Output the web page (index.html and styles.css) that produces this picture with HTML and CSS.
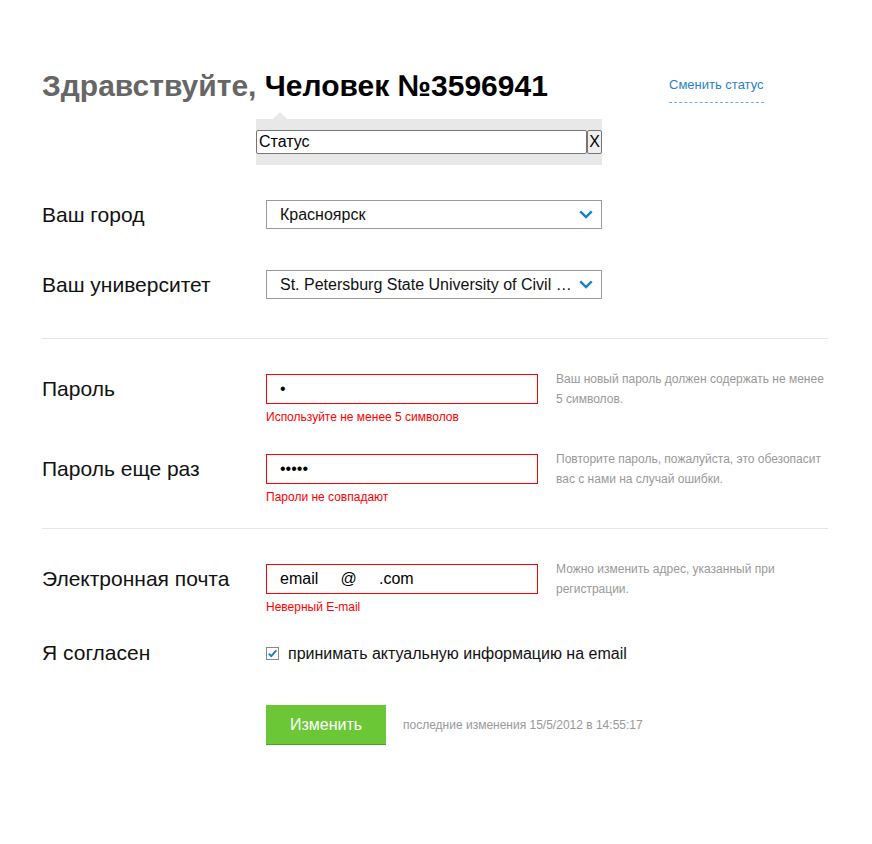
FILE: index.html
```html
<!DOCTYPE html>
<html lang="ru">
<head>
<meta charset="utf-8">
<title>Профиль</title>
<link rel="stylesheet" href="styles.css">
</head>
<body>
<div class="page">
  <div class="header">
    <h1 class="greeting"><span class="hello">Здравствуйте,</span> Человек №3596941</h1>
    <a class="status-link" href="#">Сменить статус</a>
  </div>
  <div class="status-pop">
    <input class="status-input" type="text" value="Статус"><button class="status-close" type="button">X</button>
  </div>

  <div class="row row-city">
    <div class="label label-sel">Ваш город</div>
    <div class="select">
      <span class="select-text">Красноярск</span>
      <svg class="chev" width="14" height="9" viewBox="0 0 14 9"><path d="M1.3 1.3 L7 7 L12.7 1.3" fill="none" stroke="#1a80c4" stroke-width="2.4"/></svg>
    </div>
  </div>

  <div class="row row-uni">
    <div class="label label-sel">Ваш университет</div>
    <div class="select">
      <span class="select-text">St. Petersburg State University of Civil …</span>
      <svg class="chev" width="14" height="9" viewBox="0 0 14 9"><path d="M1.3 1.3 L7 7 L12.7 1.3" fill="none" stroke="#1a80c4" stroke-width="2.4"/></svg>
    </div>
  </div>

  <hr class="sep sep-1">

  <div class="row row-pass">
    <div class="label">Пароль</div>
    <div class="field">
      <input class="text-input error" type="password" value="a">
      <div class="err">Используйте не менее 5 символов</div>
    </div>
    <div class="hint">Ваш новый пароль должен содержать не менее 5 символов.</div>
  </div>

  <div class="row row-pass2">
    <div class="label">Пароль еще раз</div>
    <div class="field">
      <input class="text-input error" type="password" value="abcde">
      <div class="err">Пароли не совпадают</div>
    </div>
    <div class="hint">Повторите пароль, пожалуйста, это обезопасит вас с нами на случай ошибки.</div>
  </div>

  <hr class="sep sep-2">

  <div class="row row-email">
    <div class="label">Электронная почта</div>
    <div class="field">
      <input class="text-input error" type="text" value="email     @     .com">
      <div class="err">Неверный E-mail</div>
    </div>
    <div class="hint">Можно изменить адрес, указанный при регистрации.</div>
  </div>

  <div class="row row-agree">
    <div class="label">Я согласен</div>
    <label class="check">
      <span class="box"><svg width="11" height="11" viewBox="0 0 11 11"><path d="M1.8 5.6 L4.3 8.1 L9.3 2.4" fill="none" stroke="#1a80c4" stroke-width="2"/></svg></span>
      <span class="check-text">принимать актуальную информацию на email</span>
    </label>
  </div>

  <div class="row row-submit">
    <div class="label"></div>
    <button class="submit" type="button">Изменить</button>
    <span class="last-change">последние изменения 15/5/2012 в 14:55:17</span>
  </div>
</div>
</body>
</html>
```

FILE: styles.css
```css
html, body {
  margin: 0;
  padding: 0;
  background: #fff;
}
body {
  font-family: Arial, "Liberation Sans", sans-serif;
  color: #000;
}
.page {
  width: 786px;
  padding: 69px 0 60px 42px;
}
.header {
  display: flex;
  align-items: flex-start;
}
.greeting {
  flex: 0 0 627px;
  margin: 0;
  font-size: 30px;
  line-height: 34px;
  font-weight: bold;
  color: #000;
}
.hello {
  color: #666;
}
.status-link {
  margin-top: 8px;
  font-size: 13px;
  line-height: 16px;
  color: #2a7fc9;
  text-decoration: none;
  padding-bottom: 9px;
  border-bottom: 1px dashed #6aaee0;
}
.status-pop {
  position: relative;
  margin: 16px 0 0 214px;
  width: 346px;
  padding: 11px 0;
  background: #e8e8e8;
  display: flex;
  box-sizing: border-box;
}
.status-pop::before {
  content: "";
  position: absolute;
  top: -7px;
  left: 17px;
  border-left: 7px solid transparent;
  border-right: 7px solid transparent;
  border-bottom: 7px solid #e8e8e8;
}
.status-input {
  width: 331px;
  height: 24px;
  box-sizing: border-box;
  margin: 0;
  padding: 0 2px;
  border: 1px solid #767676;
  border-radius: 2px;
  font-family: Arial, "Liberation Sans", sans-serif;
  font-size: 16px;
  color: #000;
  background: #fff;
}
.status-close {
  width: 15px;
  height: 24px;
  margin: 0;
  padding: 0;
  border: 1px solid #767676;
  border-radius: 2px;
  background: #efefef;
  font-family: Arial, "Liberation Sans", sans-serif;
  font-size: 16px;
  color: #000;
}
.row {
  display: flex;
  align-items: flex-start;
}
.label {
  flex: 0 0 224px;
  font-size: 21px;
  line-height: 30px;
  color: #111;
}
.label-sel {
  line-height: 29px;
}
.row-city { margin-top: 35px; }
.row-uni { margin-top: 41px; }
.select {
  width: 336px;
  height: 29px;
  box-sizing: border-box;
  border: 1px solid #9a9a9a;
  display: flex;
  align-items: center;
  justify-content: space-between;
  padding: 0 8px 0 13px;
  font-size: 16px;
  color: #111;
}
.chev {
  display: block;
}
.sep {
  margin: 0;
  border: 0;
  height: 1px;
  background: #e4e4e4;
}
.sep-1 { margin-top: 39px; }
.sep-2 { margin-top: 24px; }
.row-pass { margin-top: 35px; }
.row-pass2 { margin-top: 30px; }
.row-email { margin-top: 35px; }
.field {
  width: 272px;
}
.text-input {
  display: block;
  width: 272px;
  height: 30px;
  box-sizing: border-box;
  margin: 0;
  padding: 0 13px;
  border: 1px solid #ccc;
  border-radius: 0;
  outline: none;
  font-family: Arial, "Liberation Sans", sans-serif;
  font-size: 16px;
  color: #000;
  background: #fff;
}
.text-input.error {
  border-color: #f00;
}
.err {
  margin-top: 6px;
  font-size: 12px;
  line-height: 14px;
  color: #f00;
}
.hint {
  margin: -5px 0 0 18px;
  width: 272px;
  font-size: 12px;
  line-height: 20px;
  color: #999;
}
.row-agree { margin-top: 24px; }
.check {
  display: flex;
  align-items: center;
  height: 30px;
  padding-top: 1px;
  box-sizing: border-box;
}
.box {
  width: 13px;
  height: 13px;
  box-sizing: border-box;
  border: 1px solid #888;
  display: flex;
  align-items: center;
  justify-content: center;
}
.check-text {
  margin-left: 9px;
  font-size: 16px;
  color: #111;
}
.row-submit {
  margin-top: 37px;
  align-items: center;
}
.submit {
  width: 120px;
  height: 40px;
  margin: 0;
  padding: 0;
  border: 0;
  border-bottom: 1px solid #4e9e2a;
  background: #6cc737;
  color: #fff;
  font-family: Arial, "Liberation Sans", sans-serif;
  font-size: 16px;
}
.last-change {
  margin-left: 17px;
  font-size: 12px;
  color: #999;
}
```
